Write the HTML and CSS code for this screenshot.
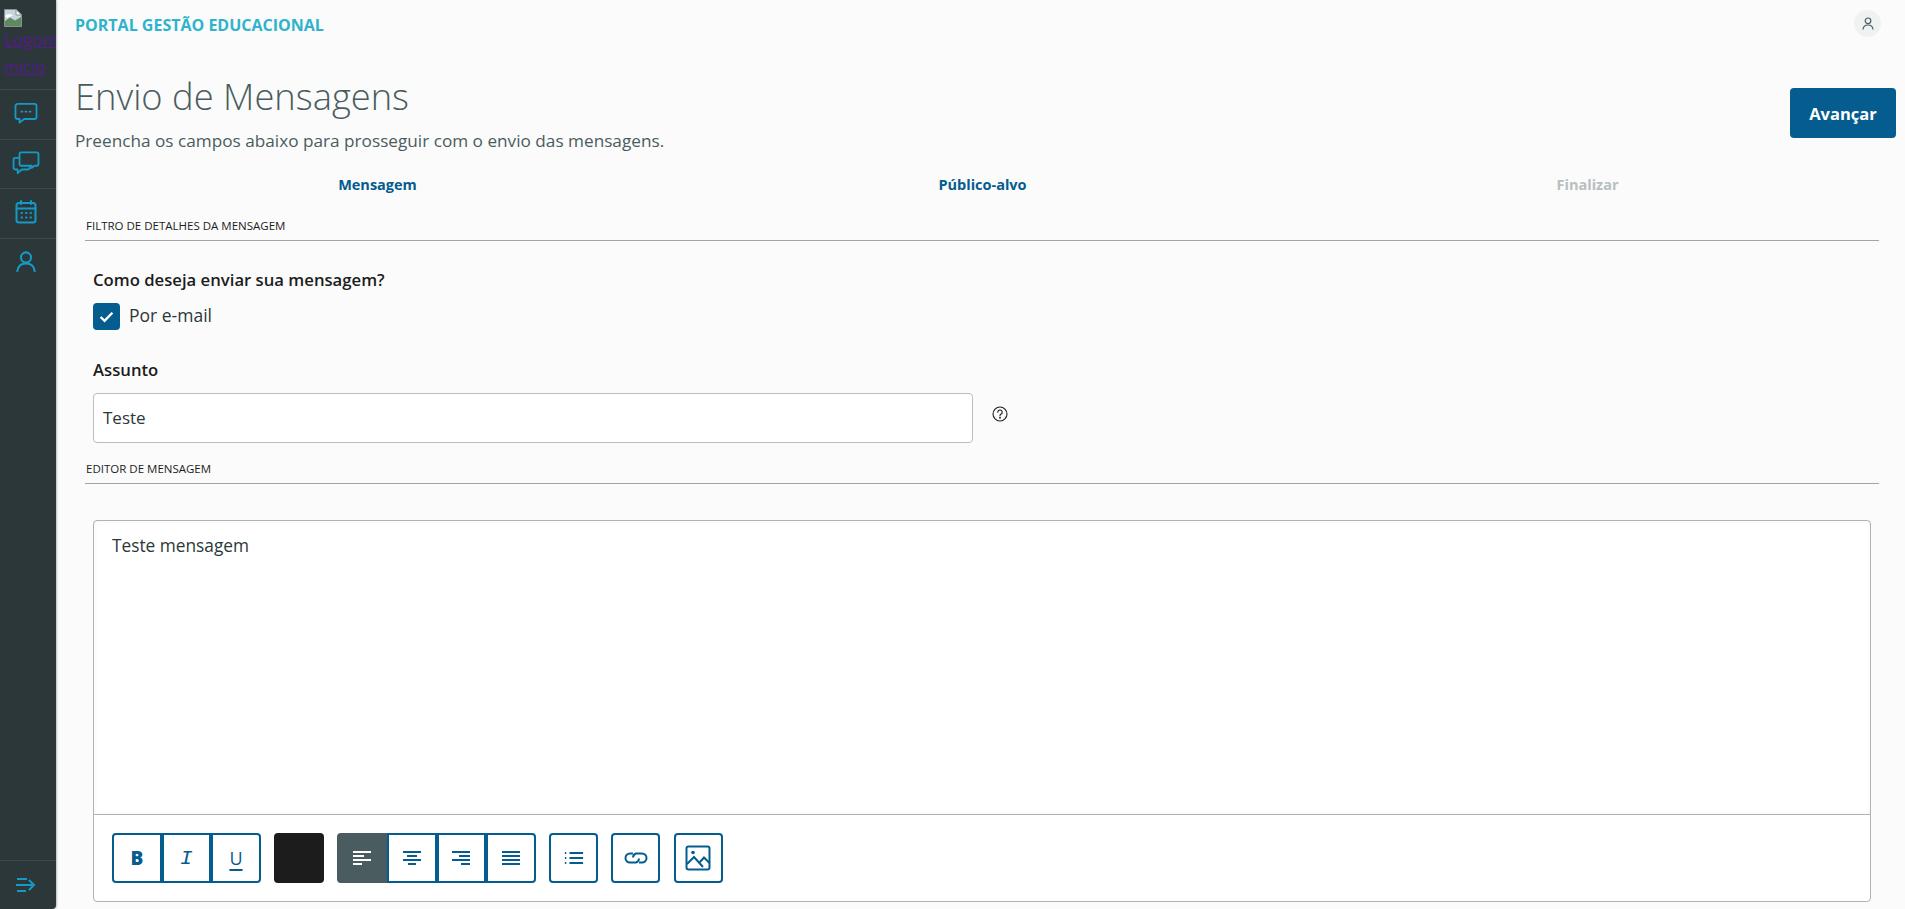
FILE: index.html
```html
<!DOCTYPE html>
<html lang="pt-BR">
<head>
<meta charset="utf-8">
<title>Envio de Mensagens</title>
<link rel="stylesheet" href="styles.css">
</head>
<body>
<div class="app">
  <aside class="sidebar">
    <a class="logo" href="#">
      <svg class="broken" width="18" height="18" viewBox="0 0 18 18"><path d="M0.5 0.5H12L17.5 6V17.5H0.5Z" fill="#c8d4de" stroke="#8a8f90"/><path d="M12 0.5V6H17.5Z" fill="#fff" stroke="#8a8f90"/><path d="M1 16V12L6 8.500L11 11.500L17 8V17H1Z" fill="#5f8a5f"/><path d="M1 7C4 4 7 5 9 6.500L3 9Z" fill="#fff"/></svg>
      <span class="logo-text">Logomarca início</span>
    </a>
    <nav class="nav">
      <a class="nav-item" href="#"><svg width="24" height="22" viewBox="0 0 26 24" fill="none" stroke="#149ac6" stroke-width="2" stroke-linejoin="round"><path d="M4 2H22A2.500 2.500 0 0 1 24.500 4.500V16A2.500 2.500 0 0 1 22 18.500H11L6 22.500V18.500H4A2.500 2.500 0 0 1 1.500 16V4.500A2.500 2.500 0 0 1 4 2Z"/><path d="M8 10.500H9M12.500 10.500H13.500M17 10.500H18" stroke-linecap="round"/></svg></a>
      <a class="nav-item" href="#"><svg width="28" height="24" viewBox="0 0 30 26" fill="none" stroke="#149ac6" stroke-width="2" stroke-linejoin="round"><path d="M10 1.500H26.500A2 2 0 0 1 28.500 3.500V14A2 2 0 0 1 26.500 16H24L21 18.500V16H10A2 2 0 0 1 8 14V3.500A2 2 0 0 1 10 1.500Z"/><path d="M8 7.500H3.500A2 2 0 0 0 1.500 9.500V18A2 2 0 0 0 3.500 20H6V24L10.500 20H17A2 2 0 0 0 19 18V16"/></svg></a>
      <a class="nav-item" href="#"><svg width="22" height="24" viewBox="0 0 22 24" fill="none" stroke="#149ac6" stroke-width="2" stroke-linecap="round"><rect x="1.500" y="3" width="19" height="19.500" rx="2.500"/><path d="M1.500 8.500H20.500M6 1V4M16 1V4"/><path d="M6.500 13H7M11 13H11.500M15.500 13H16M6.500 17.500H7M11 17.500H11.500M15.500 17.500H16"/></svg></a>
      <a class="nav-item" href="#"><svg width="22" height="22" viewBox="0 0 22 24" fill="none" stroke="#149ac6" stroke-width="2.200" stroke-linecap="round"><circle cx="11" cy="7" r="5.500"/><path d="M1.500 22C2 16.500 6 13.500 11 13.500S20 16.500 20.500 22"/></svg></a>
    </nav>
    <a class="collapse" href="#"><svg width="20" height="16" viewBox="0 0 20 16" fill="none" stroke="#149ac6" stroke-width="2"><path d="M1 2H11M0 8H16M1 14H10"/><path d="M13 3L18 8L13 13" stroke-linejoin="miter"/></svg></a>
  </aside>

  <main class="main">
    <header class="topbar">
      <span class="brand">PORTAL GESTÃO EDUCACIONAL</span>
      <span class="avatar"><svg width="12" height="13" viewBox="0 0 12 13" fill="none" stroke="#4a5c60" stroke-width="1.200"><circle cx="6" cy="3.800" r="2.800"/><path d="M1 12.500C1.300 9.500 3.500 8 6 8S10.700 9.500 11 12.500"/></svg></span>
    </header>

    <div class="page-head">
      <div>
        <h1 class="title">Envio de Mensagens</h1>
        <p class="subtitle">Preencha os campos abaixo para prosseguir com o envio das mensagens.</p>
      </div>
      <button class="primary" type="button">Avançar</button>
    </div>

    <div class="steps">
      <span class="step">Mensagem</span>
      <span class="step">Público-alvo</span>
      <span class="step step-off">Finalizar</span>
    </div>

    <section class="section">
      <h2 class="section-title">FILTRO DE DETALHES DA MENSAGEM</h2>
      <div class="fields">
        <div class="label">Como deseja enviar sua mensagem?</div>
        <label class="check">
          <span class="box"><svg width="15" height="12" viewBox="0 0 14 11" fill="none" stroke="#fff" stroke-width="2.200"><path d="M1.500 5.500L5.200 9L12.500 1.500"/></svg></span>
          <span class="check-text">Por e-mail</span>
        </label>
        <div class="label label-subject">Assunto</div>
        <div class="subject-row">
          <div class="input"><span class="input-text">Teste</span></div>
          <svg class="help" width="16" height="16" viewBox="0 0 16 16" fill="none" stroke="#1c1c1c" stroke-width="1.100"><circle cx="8" cy="8" r="7"/><path d="M5.800 6.300A2.200 2.200 0 1 1 8.700 8.300C8.100 8.600 8 9 8 9.800" stroke-linecap="round"/><circle cx="8" cy="11.700" r="0.400"/></svg>
        </div>
      </div>
    </section>

    <section class="section section-editor">
      <h2 class="section-title">EDITOR DE MENSAGEM</h2>
      <div class="editor">
        <div class="editor-body">Teste mensagem</div>
        <div class="toolbar">
          <div class="group">
            <span class="tool tool-b">B</span>
            <span class="tool tool-i">I</span>
            <span class="tool tool-u">U</span>
          </div>
          <span class="swatch"></span>
          <div class="group">
            <span class="tool tool-on"><svg class="ico" viewBox="0 0 20 16"><path d="M1 2H19M1 6H12M1 10H19M1 14H10"/></svg></span>
            <span class="tool"><svg class="ico" viewBox="0 0 20 16"><path d="M1 2H19M5 6H15M1 10H19M6 14H14"/></svg></span>
            <span class="tool"><svg class="ico" viewBox="0 0 20 16"><path d="M1 2H19M8 6H19M1 10H19M10 14H19"/></svg></span>
            <span class="tool"><svg class="ico" viewBox="0 0 20 16"><path d="M1 2H19M1 6H19M1 10H19M1 14H19"/></svg></span>
          </div>
          <span class="tool tool-solo"><svg class="ico" viewBox="0 0 22 16"><path d="M6 2.500H21M6 8H21M6 13.500H21"/><path d="M1 2.500H2.500M1 8H2.500M1 13.500H2.500"/></svg></span>
          <span class="tool tool-solo"><svg class="ico ico-link" viewBox="0 0 24 12"><path d="M9 1.500H6A4.500 4.500 0 0 0 6 10.500H12A4.500 4.500 0 0 0 15 6.500"/><path d="M15 10.500H18A4.500 4.500 0 0 0 18 1.500H12A4.500 4.500 0 0 0 9 5.500"/></svg></span>
          <span class="tool tool-solo"><svg class="ico ico-img" viewBox="0 0 26 26"><rect x="1.500" y="1.500" width="23" height="23" rx="2"/><path d="M2 19L9 12L18 22M15 17L19 12.500L24.500 18"/><circle cx="8" cy="7.500" r="1.800" class="fill"/></svg></span>
        </div>
      </div>
    </section>
  </main>
</div>
</body>
</html>
```
FILE: styles.css
```css
* { box-sizing: border-box; }
html, body { margin: 0; height: 100%; overflow: hidden; }
body {
  background: #fbfbfb;
  color: #1c1c1c;
  font-family: "Open Sans", "Noto Sans", "Liberation Sans", sans-serif;
}
.app { display: flex; height: 909px; }

.sidebar {
  flex: 0 0 56px;
  width: 56px;
  height: 909px;
  background: #2c3739;
  border-bottom-right-radius: 4px;
  box-shadow: 1px 0 2px rgba(0,0,0,.25);
  display: flex;
  flex-direction: column;
  overflow: hidden;
}
.logo {
  display: block;
  height: 90px;
  padding: 9px 0 0 4px;
  color: #551a8b;
  font-size: 17px;
  line-height: 27px;
  border-bottom: 1px solid #3d494c;
  overflow: hidden;
}
.broken { display: block; }
.logo-text { display: block; width: 52px; margin-top: -1px; }
.nav { flex: 1; display: flex; flex-direction: column; }
.nav-item {
  height: 49.500px;
  padding: 0 4px 2px 0;
  display: flex;
  align-items: center;
  justify-content: center;
  border-bottom: 1px solid #3d494c;
}
.nav-item:last-child { border-bottom: 0; }
.collapse {
  height: 49px;
  padding-right: 4px;
  border-top: 1px solid #3d494c;
  display: flex;
  align-items: center;
  justify-content: center;
}

.main { flex: 1; min-width: 0; padding-left: 19px; padding-right: 9px; }

.topbar {
  height: 49px;
  display: flex;
  align-items: center;
  justify-content: space-between;
  padding-right: 15px;
}
.brand { color: #2fb3cd; font-size: 16px; font-weight: 700; }
.avatar {
  width: 27px;
  height: 27px;
  margin-top: -2px;
  border-radius: 50%;
  background: #f0f1f1;
  display: flex;
  align-items: center;
  justify-content: center;
}

.page-head {
  display: flex;
  justify-content: space-between;
  align-items: flex-start;
  height: 124px;
}
.title {
  margin: 24px 0 0;
  font-size: 36.300px;
  line-height: 46px;
  font-weight: 300;
  color: #4a5c60;
}
.subtitle {
  margin: 10px 0 0;
  font-size: 17.200px;
  line-height: 24px;
  color: #4a5c60;
}
.primary {
  margin-top: 39px;
  width: 106px;
  height: 50px;
  border: 0;
  border-radius: 4px;
  background: #045c8f;
  color: #fff;
  font: 700 16.500px "Open Sans", sans-serif;
}

.steps {
  display: grid;
  grid-template-columns: repeat(3, 1fr);
  width: 1815px;
  height: 24px;
  text-align: center;
}
.step { font-size: 14.500px; line-height: 24px; font-weight: 700; color: #045c8f; }
.step-off { color: #b6bfc1; }

.section { margin-left: 10px; margin-top: 21px; }
.section-title {
  margin: 0;
  padding: 0 0 7px 1px;
  font-size: 11.500px;
  line-height: 15px;
  font-weight: 400;
  color: #1c1c1c;
  border-bottom: 1px solid #a2a5a6;
  width: 1794px;
}
.fields { padding: 28px 0 0 8px; }
.label { font-size: 16.700px; line-height: 22px; font-weight: 600; color: #1c1c1c; }
.check {
  display: flex;
  align-items: center;
  gap: 9px;
  margin-top: 12px;
  font-size: 17.500px;
  color: #2c3739;
}
.check-text { margin-top: -3px; }
.box {
  width: 27px;
  height: 27px;
  border-radius: 4px;
  background: #045c8f;
  display: flex;
  align-items: center;
  justify-content: center;
}
.label-subject { margin-top: 29px; }
.subject-row { display: flex; align-items: center; gap: 19px; margin-top: 12px; }
.input {
  width: 880px;
  height: 50px;
  padding: 0 9px;
  display: flex;
  align-items: center;
  background: #fff;
  border: 1px solid #b6bfc1;
  border-radius: 4px;
  font-size: 17px;
  color: #2c3739;
}
.input-text { margin-top: -2px; }
.help { margin-top: -8px; }

.section-editor { margin-top: 18px; }
.editor {
  width: 1778px;
  height: 382px;
  margin: 36px 0 0 8px;
  background: #fff;
  border: 1px solid #b0b3b4;
  border-radius: 4px;
  display: flex;
  flex-direction: column;
}
.editor-body {
  flex: 1;
  padding: 13px 18px;
  font-size: 17.300px;
  line-height: 24px;
  color: #2c3739;
  box-shadow: inset 0 0 6px rgba(0,0,0,.04);
}
.toolbar {
  height: 87px;
  border-top: 1px solid #b0b3b4;
  padding: 18px 18px 0;
  display: flex;
  align-items: flex-start;
  gap: 13.300px;
}
.group { display: flex; }
.tool {
  width: 49.600px;
  height: 50px;
  display: flex;
  align-items: center;
  justify-content: center;
  background: #fff;
  border: 2px solid #045c8f;
  color: #045c8f;
  font-size: 18px;
}
.group .tool:first-child { border-radius: 4px 0 0 4px; }
.group .tool:last-child { border-radius: 0 4px 4px 0; }
.tool-b { font-weight: 800; font-size: 19px; }
.tool-i { font-style: italic; font-family: "Liberation Mono", monospace; font-size: 21px; }
.tool-u { text-decoration: underline; text-decoration-thickness: 2px; text-underline-offset: 4px; }
.group .tool-on { background: #4a5c60; border-color: #4a5c60; }
.tool-on .ico { stroke: #fff; }
.tool-solo { border-radius: 4px; width: 49px; }
.swatch { width: 50px; height: 50px; border-radius: 4px; background: #1c1c1c; }
.ico { width: 20px; height: 16px; fill: none; stroke: #045c8f; stroke-width: 2; }
.ico-link { width: 24px; height: 12px; }
.ico-img { width: 26px; height: 26px; }
.ico-img .fill { fill: #045c8f; stroke: none; }
```
